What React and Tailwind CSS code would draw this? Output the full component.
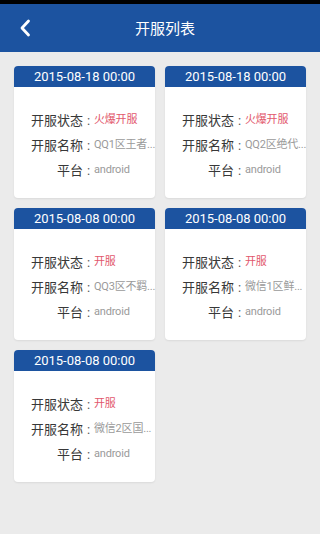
import React from 'react';

const servers = [
    { date: '2015-08-18 00:00', status: '火爆开服', name: 'QQ1区王者...', platform: 'android' },
    { date: '2015-08-18 00:00', status: '火爆开服', name: 'QQ2区绝代...', platform: 'android' },
    { date: '2015-08-08 00:00', status: '开服', name: 'QQ3区不羁...', platform: 'android' },
    { date: '2015-08-08 00:00', status: '开服', name: '微信1区鲜...', platform: 'android' },
    { date: '2015-08-08 00:00', status: '开服', name: '微信2区国...', platform: 'android' },
];

const Row = ({ label, value, valueClass }) => (
    <div className="flex items-center h-[25px]">
        <span className="w-[52px] shrink-0 text-right text-[13px] text-[#383838]">{label}</span>
        <span className="w-[11px] shrink-0 text-center text-[13px] text-[#555]">:</span>
        <span className={`whitespace-nowrap text-[11px] tracking-[-0.2px] ${valueClass}`}>{value}</span>
    </div>
);

const ServerCard = ({ server }) => (
    <div className="bg-white rounded-[4px] overflow-hidden shadow-[0_1px_2px_rgba(0,0,0,0.08)]">
        <div className="h-[21px] bg-[#1c53a0] flex items-center justify-center text-white text-[13px]">
            {server.date}
        </div>
        <div className="pl-[17px] pt-[21px] pb-[15px]">
            <Row label="开服状态" value={server.status} valueClass="text-[#e2576c]" />
            <Row label="开服名称" value={server.name} valueClass="text-[#9a9a9a]" />
            <Row label="平台" value={server.platform} valueClass="text-[#9a9a9a]" />
        </div>
    </div>
);

export default function App() {
    return (
        <div className="w-[320px] h-[534px] bg-[#ebebeb] flex flex-col" style={{ fontFamily: 'Roboto, "Noto Sans CJK SC", sans-serif' }}>
            <div className="h-[4px] bg-black shrink-0" />
            <div className="h-[48px] bg-[#1c53a0] flex items-center shrink-0">
                <button className="w-[50px] h-full flex items-center pl-[19px]">
                    <svg width="12" height="18" viewBox="0 0 12 18" fill="none">
                        <polyline points="9.5,2 3,9 9.5,16" stroke="white" strokeWidth="2.8" strokeLinecap="round" strokeLinejoin="round" />
                    </svg>
                </button>
                <h1 className="flex-1 text-center text-white text-[15px] pr-[40px] pt-[2px]">开服列表</h1>
            </div>
            <div className="grid grid-cols-2 gap-[10px] px-[14px] pt-[14px]">
                {servers.map((s, i) => (
                    <ServerCard key={i} server={s} />
                ))}
            </div>
        </div>
    );
}
